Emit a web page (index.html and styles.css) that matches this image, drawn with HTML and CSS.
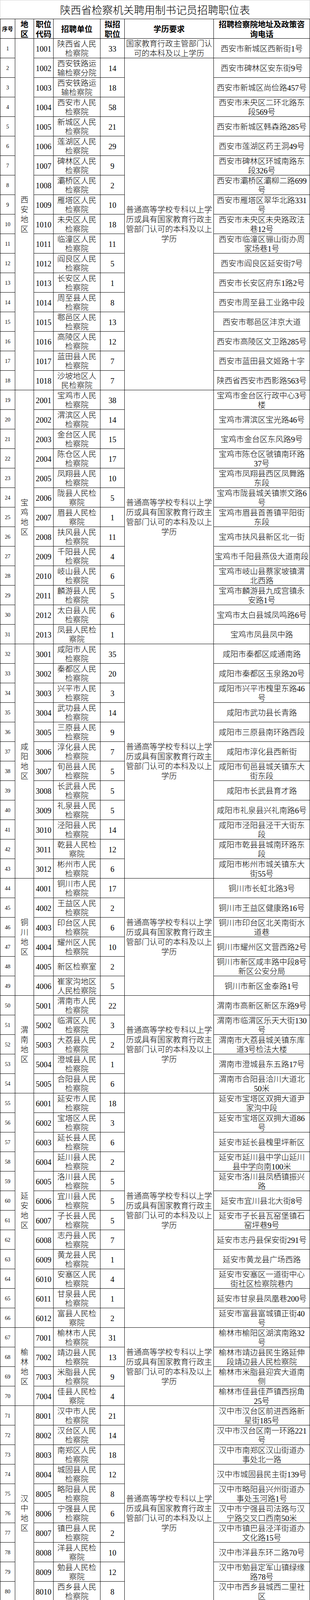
FILE: index.html
```html
<!DOCTYPE html>
<html lang="zh-CN">
<head>
<meta charset="utf-8">
<title>陕西省检察机关聘用制书记员招聘职位表</title>
<link rel="stylesheet" href="styles.css">
</head>
<body>
<div class="sheet">
<div class="title">陕西省检察机关聘用制书记员招聘职位表</div>
<div class="grid">
<div class="head small">序号</div>
<div class="head"><span>地<br>区</span></div>
<div class="head"><span>职位<br>代码</span></div>
<div class="head">招聘单位</div>
<div class="head"><span>拟招<br>职位</span></div>
<div class="head">学历要求</div>
<div class="head"><span>招聘检察院地址及政策咨<br>询电话</span></div>

<div class="seq">1</div><div class="region rows-18"><span>西安地区</span></div><div class="code">1001</div><div class="unit">陕西省人民检察院</div><div class="num">33</div><div class="edu">国家教育行政主管部门认可的本科及以上学历</div><div class="addr">西安市新城区西新街1号</div>
<div class="seq">2</div><div class="code">1002</div><div class="unit">西安铁路运输检察分院</div><div class="num">14</div><div class="edu rows-17">普通高等学校专科以上学历或具有国家教育行政主管部门认可的本科及以上学历</div><div class="addr">西安市碑林区安东街9号</div>
<div class="seq">3</div><div class="code">1003</div><div class="unit">西安铁路运输检察院</div><div class="num">18</div><div class="addr">西安市新城区尚俭路457号</div>
<div class="seq">4</div><div class="code">1004</div><div class="unit">西安市人民检察院</div><div class="num">58</div><div class="addr">西安市未央区二环北路东<br>段569号</div>
<div class="seq">5</div><div class="code">1005</div><div class="unit">新城区人民检察院</div><div class="num">21</div><div class="addr">西安市新城区韩森路285号</div>
<div class="seq">6</div><div class="code">1006</div><div class="unit">莲湖区人民检察院</div><div class="num">29</div><div class="addr">西安市莲湖区药王洞49号</div>
<div class="seq">7</div><div class="code">1007</div><div class="unit">碑林区人民检察院</div><div class="num">9</div><div class="addr">西安市碑林区环城南路东<br>段326号</div>
<div class="seq">8</div><div class="code">1008</div><div class="unit">灞桥区人民检察院</div><div class="num">2</div><div class="addr">西安市灞桥区灞柳二路699<br>号</div>
<div class="seq">9</div><div class="code">1009</div><div class="unit">雁塔区人民检察院</div><div class="num">10</div><div class="addr">西安市雁塔区翠华北路331<br>号</div>
<div class="seq">10</div><div class="code">1010</div><div class="unit">未央区人民检察院</div><div class="num">18</div><div class="addr">西安市未央区未央路政法<br>巷12号</div>
<div class="seq">11</div><div class="code">1011</div><div class="unit">临潼区人民检察院</div><div class="num">11</div><div class="addr">西安市临潼区骊山街办周<br>家场巷1号</div>
<div class="seq">12</div><div class="code">1012</div><div class="unit">阎良区人民检察院</div><div class="num">5</div><div class="addr">西安市阎良区延安街7号</div>
<div class="seq">13</div><div class="code">1013</div><div class="unit">长安区人民检察院</div><div class="num">1</div><div class="addr">西安市长安区府东1路2号</div>
<div class="seq">14</div><div class="code">1014</div><div class="unit">周至县人民检察院</div><div class="num">8</div><div class="addr">西安市周至县工业路中段</div>
<div class="seq">15</div><div class="code">1015</div><div class="unit">鄠邑区人民检察院</div><div class="num">13</div><div class="addr">西安市鄠邑区沣京大道</div>
<div class="seq">16</div><div class="code">1016</div><div class="unit">高陵区人民检察院</div><div class="num">12</div><div class="addr">西安市高陵区文卫路285号</div>
<div class="seq">17</div><div class="code">1017</div><div class="unit">蓝田县人民检察院</div><div class="num">7</div><div class="addr">西安市蓝田县文姬路十字</div>
<div class="seq">18</div><div class="code">1018</div><div class="unit">沙坡地区人民检察院</div><div class="num">7</div><div class="addr">陕西省西安市西影路563号</div>

<div class="seq">19</div><div class="region rows-13"><span>宝鸡地区</span></div><div class="code">2001</div><div class="unit">宝鸡市人民检察院</div><div class="num">38</div><div class="edu rows-13">普通高等学校专科以上学历或具有国家教育行政主管部门认可的本科及以上学历</div><div class="addr">宝鸡市金台区行政中心3号<br>楼</div>
<div class="seq">20</div><div class="code">2002</div><div class="unit">渭滨区人民检察院</div><div class="num">14</div><div class="addr">宝鸡市渭滨区宝光路46号</div>
<div class="seq">21</div><div class="code">2003</div><div class="unit">金台区人民检察院</div><div class="num">15</div><div class="addr">宝鸡市金台区东风路9号</div>
<div class="seq">22</div><div class="code">2004</div><div class="unit">陈仓区人民检察院</div><div class="num">17</div><div class="addr">宝鸡市陈仓区虢镇南环路<br>37号</div>
<div class="seq">23</div><div class="code">2005</div><div class="unit">凤翔县人民检察院</div><div class="num">10</div><div class="addr">宝鸡市凤翔县西区凤舞路<br>东段</div>
<div class="seq">24</div><div class="code">2006</div><div class="unit">陇县人民检察院</div><div class="num">5</div><div class="addr">宝鸡市陇县城关镇崇文路6<br>号</div>
<div class="seq">25</div><div class="code">2007</div><div class="unit">眉县人民检察院</div><div class="num">1</div><div class="addr">宝鸡市眉县首善镇平阳街<br>东段</div>
<div class="seq">26</div><div class="code">2008</div><div class="unit">扶风县人民检察院</div><div class="num">11</div><div class="addr">宝鸡市扶风县新区北一街</div>
<div class="seq">27</div><div class="code">2009</div><div class="unit">千阳县人民检察院</div><div class="num">4</div><div class="addr">宝鸡市千阳县燕伋大道南段</div>
<div class="seq">28</div><div class="code">2010</div><div class="unit">岐山县人民检察院</div><div class="num">6</div><div class="addr">宝鸡市岐山县蔡家坡镇渭<br>北西路</div>
<div class="seq">29</div><div class="code">2011</div><div class="unit">麟游县人民检察院</div><div class="num">5</div><div class="addr">宝鸡市麟游县九成宫镇永<br>安路1号</div>
<div class="seq">30</div><div class="code">2012</div><div class="unit">太白县人民检察院</div><div class="num">6</div><div class="addr">宝鸡市太白县城凤鸣路6号</div>
<div class="seq">31</div><div class="code">2013</div><div class="unit">凤县人民检察院</div><div class="num">1</div><div class="addr">宝鸡市凤县凤中路</div>

<div class="seq">32</div><div class="region rows-12"><span>咸阳地区</span></div><div class="code">3001</div><div class="unit">咸阳市人民检察院</div><div class="num">35</div><div class="edu rows-12">普通高等学校专科以上学历或具有国家教育行政主管部门认可的本科及以上学历</div><div class="addr">咸阳市秦都区咸通南路</div>
<div class="seq">33</div><div class="code">3002</div><div class="unit">秦都区人民检察院</div><div class="num">20</div><div class="addr">咸阳市秦都区玉泉路20号</div>
<div class="seq">34</div><div class="code">3003</div><div class="unit">兴平市人民检察院</div><div class="num">3</div><div class="addr">咸阳市兴平市槐里东路46<br>号</div>
<div class="seq">35</div><div class="code">3004</div><div class="unit">武功县人民检察院</div><div class="num">14</div><div class="addr">咸阳市武功县长青路</div>
<div class="seq">36</div><div class="code">3005</div><div class="unit">三原县人民检察院</div><div class="num">9</div><div class="addr">咸阳市三原县南环路西段</div>
<div class="seq">37</div><div class="code">3006</div><div class="unit">淳化县人民检察院</div><div class="num">7</div><div class="addr">咸阳市淳化县西新街</div>
<div class="seq">38</div><div class="code">3007</div><div class="unit">旬邑县人民检察院</div><div class="num">5</div><div class="addr">咸阳市旬邑县城关镇东大<br>街东段</div>
<div class="seq">39</div><div class="code">3008</div><div class="unit">长武县人民检察院</div><div class="num">5</div><div class="addr">咸阳市长武县育才路</div>
<div class="seq">40</div><div class="code">3009</div><div class="unit">礼泉县人民检察院</div><div class="num">5</div><div class="addr">咸阳市礼泉县兴礼南路6号</div>
<div class="seq">41</div><div class="code">3010</div><div class="unit">泾阳县人民检察院</div><div class="num">14</div><div class="addr">咸阳市泾阳县泾干大街东<br>段</div>
<div class="seq">42</div><div class="code">3011</div><div class="unit">乾县人民检察院</div><div class="num">12</div><div class="addr">咸阳市乾县县城南环路东<br>段</div>
<div class="seq">43</div><div class="code">3012</div><div class="unit">彬州市人民检察院</div><div class="num">6</div><div class="addr">咸阳市彬州市城关镇东大<br>街55号</div>

<div class="seq">44</div><div class="region rows-6"><span>铜川地区</span></div><div class="code">4001</div><div class="unit">铜川市人民检察院</div><div class="num">17</div><div class="edu rows-6">普通高等学校专科以上学历或具有国家教育行政主管部门认可的本科及以上学历</div><div class="addr">铜川市长虹北路3号</div>
<div class="seq">45</div><div class="code">4002</div><div class="unit">王益区人民检察院</div><div class="num">2</div><div class="addr">铜川市王益区健康路16号</div>
<div class="seq">46</div><div class="code">4003</div><div class="unit">印台区人民检察院</div><div class="num">6</div><div class="addr">铜川市印台区北关南街水<br>道巷</div>
<div class="seq">47</div><div class="code">4004</div><div class="unit">耀州区人民检察院</div><div class="num">10</div><div class="addr">铜川市耀州区文营西路2号</div>
<div class="seq">48</div><div class="code">4005</div><div class="unit">新区检察室</div><div class="num">2</div><div class="addr">铜川市新区咸丰路中段8号<br>新区公安分局</div>
<div class="seq">49</div><div class="code">4006</div><div class="unit">崔家沟地区人民检察院</div><div class="num">5</div><div class="addr">铜川市新区金泰路1号</div>

<div class="seq">50</div><div class="region rows-5"><span>渭南地区</span></div><div class="code">5001</div><div class="unit">渭南市人民检察院</div><div class="num">22</div><div class="edu rows-5">普通高等学校专科以上学历或具有国家教育行政主管部门认可的本科及以上学历</div><div class="addr">渭南市高新区新区东路9号</div>
<div class="seq">51</div><div class="code">5002</div><div class="unit">临渭区人民检察院</div><div class="num">3</div><div class="addr">渭南市临渭区乐天大街130<br>号</div>
<div class="seq">52</div><div class="code">5003</div><div class="unit">大荔县人民检察院</div><div class="num">2</div><div class="addr">渭南市大荔县城关镇东库<br>道3号检法大楼</div>
<div class="seq">53</div><div class="code">5004</div><div class="unit">澄城县人民检察院</div><div class="num">1</div><div class="addr">渭南市澄城县东五路17号</div>
<div class="seq">54</div><div class="code">5005</div><div class="unit">合阳县人民检察院</div><div class="num">6</div><div class="addr">渭南市合阳县洽川大道北<br>50米</div>

<div class="seq">55</div><div class="region rows-12"><span>延安地区</span></div><div class="code">6001</div><div class="unit">延安市人民检察院</div><div class="num">18</div><div class="edu rows-12">普通高等学校专科以上学历或具有国家教育行政主管部门认可的本科及以上学历</div><div class="addr">延安市宝塔区双拥大道尹<br>家沟中段</div>
<div class="seq">56</div><div class="code">6002</div><div class="unit">宝塔区人民检察院</div><div class="num">3</div><div class="addr">延安市宝塔区双拥大道86<br>号</div>
<div class="seq">57</div><div class="code">6003</div><div class="unit">延长县人民检察院</div><div class="num">6</div><div class="addr">延安市延长县槐里坪新区</div>
<div class="seq">58</div><div class="code">6004</div><div class="unit">延川县人民检察院</div><div class="num">2</div><div class="addr">延安市延川县中学山延川<br>县中学向南100米</div>
<div class="seq">59</div><div class="code">6005</div><div class="unit">洛川县人民检察院</div><div class="num">5</div><div class="addr">延安市洛川县凤栖镇振兴<br>路</div>
<div class="seq">60</div><div class="code">6006</div><div class="unit">宜川县人民检察院</div><div class="num">5</div><div class="addr">延安市宜川县北大街8号</div>
<div class="seq">61</div><div class="code">6007</div><div class="unit">子长县人民检察院</div><div class="num">5</div><div class="addr">延安市子长县瓦窑堡镇石<br>窑坪巷9号</div>
<div class="seq">62</div><div class="code">6008</div><div class="unit">志丹县人民检察院</div><div class="num">7</div><div class="addr">延安市志丹县保安街291号</div>
<div class="seq">63</div><div class="code">6009</div><div class="unit">黄龙县人民检察院</div><div class="num">1</div><div class="addr">延安市黄龙县广场西路</div>
<div class="seq">64</div><div class="code">6010</div><div class="unit">安塞区人民检察院</div><div class="num">4</div><div class="addr">延安市安塞区一道街中心<br>街社区检察院巷内</div>
<div class="seq">65</div><div class="code">6011</div><div class="unit">甘泉县人民检察院</div><div class="num">1</div><div class="addr">延安市甘泉县凤凰巷200号</div>
<div class="seq">66</div><div class="code">6012</div><div class="unit">富县人民检察院</div><div class="num">2</div><div class="addr">延安市富县富城镇正街40<br>号</div>

<div class="seq">67</div><div class="region rows-4"><span>榆林地区</span></div><div class="code">7001</div><div class="unit">榆林市人民检察院</div><div class="num">31</div><div class="edu rows-4">普通高等学校专科以上学历或具有国家教育行政主管部门认可的本科及以上学历</div><div class="addr">榆林市榆阳区湖滨南路32<br>号</div>
<div class="seq">68</div><div class="code">7002</div><div class="unit">靖边县人民检察院</div><div class="num">13</div><div class="addr">榆林市靖边县民生路延伸<br>段靖边县人民检察院</div>
<div class="seq">69</div><div class="code">7003</div><div class="unit">米脂县人民检察院</div><div class="num">9</div><div class="addr">榆林市米脂县迎宾大道南<br>侧</div>
<div class="seq">70</div><div class="code">7004</div><div class="unit">佳县人民检察院</div><div class="num">4</div><div class="addr">榆林市佳县佳芦镇西拐角<br>25号</div>

<div class="seq">71</div><div class="region rows-11"><span>汉中地区</span></div><div class="code">8001</div><div class="unit">汉中市人民检察院</div><div class="num">21</div><div class="edu rows-11">普通高等学校专科以上学历或具有国家教育行政主管部门认可的本科及以上学历</div><div class="addr">汉中市汉台区前进西路新<br>星街185号</div>
<div class="seq">72</div><div class="code">8002</div><div class="unit">汉台区人民检察院</div><div class="num">14</div><div class="addr">汉中市汉台区南一环路221<br>号</div>
<div class="seq">73</div><div class="code">8003</div><div class="unit">南郑区人民检察院</div><div class="num">18</div><div class="addr">汉中市南郑区汉山街道办<br>事处北一路</div>
<div class="seq">74</div><div class="code">8004</div><div class="unit">城固县人民检察院</div><div class="num">12</div><div class="addr">汉中市城固县民主街139号</div>
<div class="seq">75</div><div class="code">8005</div><div class="unit">略阳县人民检察院</div><div class="num">8</div><div class="addr">汉中市略阳县兴州街道办<br>事处玉河路1号</div>
<div class="seq">76</div><div class="code">8006</div><div class="unit">宁强县人民检察院</div><div class="num">6</div><div class="addr">汉中市宁强县司法路与汉<br>宁路交叉口西南50米</div>
<div class="seq">77</div><div class="code">8007</div><div class="unit">镇巴县人民检察院</div><div class="num">2</div><div class="addr">汉中市镇巴县泾洋街道办<br>文化路15号</div>
<div class="seq">78</div><div class="code">8008</div><div class="unit">洋县人民检察院</div><div class="num">10</div><div class="addr">汉中市洋县东环二路70号</div>
<div class="seq">79</div><div class="code">8009</div><div class="unit">勉县人民检察院</div><div class="num">12</div><div class="addr">汉中市勉县定军山镇绿缘<br>路78号</div>
<div class="seq">80</div><div class="code">8010</div><div class="unit">西乡县人民检察院</div><div class="num">8</div><div class="addr">汉中市西乡县城西二里社<br>区</div>
<div class="seq">81</div><div class="code">8011</div><div class="unit">佛坪县人民检察院</div><div class="num">5</div><div class="addr">汉中市佛坪县熊猫大道29<br>号</div>

<div class="seq">82</div><div class="region rows-11"><span>安康地区</span></div><div class="code">9001</div><div class="unit">安康铁路运输检察院</div><div class="num">11</div><div class="edu rows-11">普通高等学校专科以上学历或具有国家教育行政主管部门认可的本科及以上学历</div><div class="addr">安康市汉滨区江北大道80<br>号</div>
<div class="seq">83</div><div class="code">9002</div><div class="unit">安康市人民检察院</div><div class="num">14</div><div class="addr">安康市汉滨区江北滨江大<br>道9号</div>
<div class="seq">84</div><div class="code">9003</div><div class="unit">汉滨区人民检察院</div><div class="num">7</div><div class="addr">安康市高新区长岭南路</div>
<div class="seq">85</div><div class="code">9004</div><div class="unit">紫阳县人民检察院</div><div class="num">7</div><div class="addr">安康市紫阳县环城二路</div>
<div class="seq">86</div><div class="code">9005</div><div class="unit">旬阳县人民检察院</div><div class="num">9</div><div class="addr">安康市旬阳县城关镇瑞莲<br>路32号</div>
<div class="seq">87</div><div class="code">9006</div><div class="unit">汉阴县人民检察院</div><div class="num">9</div><div class="addr">安康市汉阴县城关镇城南<br>开发新区泰和路以西</div>
<div class="seq">88</div><div class="code">9007</div><div class="unit">白河县人民检察院</div><div class="num">3</div><div class="addr">安康市白河县城关镇东坡<br>路中端</div>
<div class="seq">89</div><div class="code">9008</div><div class="unit">宁陕县人民检察院</div><div class="num">3</div><div class="addr">安康市宁陕县城关镇滨河<br>路5号</div>
<div class="seq">90</div><div class="code">9009</div><div class="unit">镇坪县人民检察院</div><div class="num">5</div><div class="addr">安康市镇坪县镇关镇政府<br>广场</div>
<div class="seq">91</div><div class="code">9010</div><div class="unit">石泉县人民检察院</div><div class="num">1</div><div class="addr">安康市石泉县城关镇向阳<br>大道东段49号</div>
<div class="seq">92</div><div class="code">9011</div><div class="unit">岚皋县人民检察院</div><div class="num">4</div><div class="addr">安康市岚皋县肖家坝湖滨<br>西路2号</div>

<div class="seq">93</div><div class="region rows-7"><span>商洛地区</span></div><div class="code">1101</div><div class="unit">商洛市人民检察院</div><div class="num">10</div><div class="edu rows-7">普通高等学校专科以上学历或具有国家教育行政主管部门认可的本科及以上学历</div><div class="addr">商洛市商州区通江路中段</div>
<div class="seq">94</div><div class="code">1102</div><div class="unit">商州区人民检察院</div><div class="num">2</div><div class="addr">商洛市商州区向阳路南段</div>
<div class="seq">95</div><div class="code">1103</div><div class="unit">洛南县人民检察院</div><div class="num">16</div><div class="addr">商洛市洛南县四皓街道政<br>法小区</div>
<div class="seq">96</div><div class="code">1104</div><div class="unit">山阳县人民检察院</div><div class="num">6</div><div class="addr">商洛市山阳县西河新区</div>
<div class="seq">97</div><div class="code">1105</div><div class="unit">镇安县人民检察院</div><div class="num">3</div><div class="addr">商洛市镇安县永乐街道办<br>青槐社区月亮湾政法小区</div>
<div class="seq">98</div><div class="code">1106</div><div class="unit">柞水县人民检察院</div><div class="num">1</div><div class="addr">商洛市柞水县县城迎宾大<br>道东侧</div>
<div class="seq">99</div><div class="code">1107</div><div class="unit">丹凤县人民检察院</div><div class="num">9</div><div class="addr">商洛市丹凤县南凤街33号</div>

<div class="blank"></div><div class="sum cols-3">合计</div><div class="num strong">972</div><div class="blank"></div><div class="blank"></div>
</div>
</div>
</body>
</html>
```

FILE: styles.css
```css
html, body {
  margin: 0;
  padding: 0;
  background: #ffffff;
}

body {
  font-family: "Liberation Serif", "Noto Sans CJK SC", serif;
  color: #000000;
}

.sheet {
  width: 793px;
}

.title {
  height: 48px;
  line-height: 48px;
  font-size: 27px;
  font-family: "Noto Sans CJK SC", sans-serif;
  font-weight: 300;
  text-align: center;
  white-space: nowrap;
  box-sizing: border-box;
  border-top: 1px solid #d4d4d4;
  border-left: 1px solid #d4d4d4;
  border-right: 1px solid #d4d4d4;
}

.grid {
  display: grid;
  grid-template-columns: 37px 47px 49px 119px 61px 227px 245px;
  grid-auto-rows: 49px;
  gap: 1px;
  padding: 1px;
  width: 793px;
  box-sizing: border-box;
  background: #000000;
}

.grid > div {
  background: #ffffff;
  display: flex;
  align-items: center;
  justify-content: center;
  text-align: center;
  font-size: 20px;
  font-weight: 300;
  line-height: 24px;
  padding-top: 3px;
  box-sizing: border-box;
  min-width: 0;
  overflow: visible;
}

.rows-4 { grid-row: span 4; }
.rows-5 { grid-row: span 5; }
.rows-6 { grid-row: span 6; }
.rows-7 { grid-row: span 7; }
.rows-11 { grid-row: span 11; }
.rows-12 { grid-row: span 12; }
.rows-13 { grid-row: span 13; }
.rows-17 { grid-row: span 17; }
.rows-18 { grid-row: span 18; }
.cols-3 { grid-column: span 3; }

.grid > .head {
  font-family: "Noto Sans CJK SC", sans-serif;
  font-weight: bold;
  white-space: nowrap;
  line-height: 25px;
  padding-top: 0;
}

.grid > .head.small {
  font-size: 14px;
}

.grid > .seq {
  font-size: 14px;
}

.grid > .region,
.grid > .edu {
  line-height: 25px;
}

.region span {
  display: block;
  width: 1em;
}

.grid > .unit {
  padding-left: 4px;
  padding-right: 4px;
}

.grid > .edu {
  padding-left: 3px;
  padding-right: 3px;
}

.grid > .addr {
  white-space: nowrap;
}

.grid > .sum,
.grid > .strong {
  font-weight: bold;
}
```
